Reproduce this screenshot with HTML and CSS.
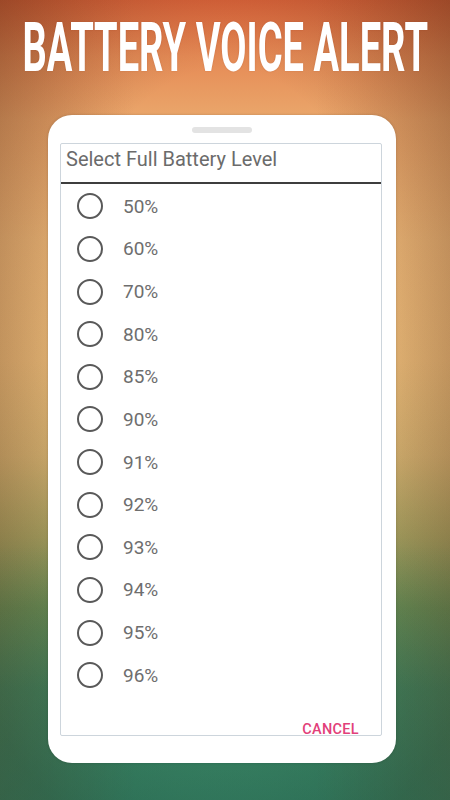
FILE: index.html
```html
<!DOCTYPE html>
<html>
<head>
<meta charset="utf-8">
<link rel="stylesheet" href="styles.css">
</head>
<body>
<div class="screen">
  <h1 class="title"><span class="title-text">BATTERY VOICE ALERT</span></h1>
  <div class="phone">
    <div class="speaker"></div>
    <div class="dialog">
      <div class="dialog-header">Select Full Battery Level</div>
      <ul class="options">
        <li class="option"><span class="radio"></span><span class="label">50%</span></li>
        <li class="option"><span class="radio"></span><span class="label">60%</span></li>
        <li class="option"><span class="radio"></span><span class="label">70%</span></li>
        <li class="option"><span class="radio"></span><span class="label">80%</span></li>
        <li class="option"><span class="radio"></span><span class="label">85%</span></li>
        <li class="option"><span class="radio"></span><span class="label">90%</span></li>
        <li class="option"><span class="radio"></span><span class="label">91%</span></li>
        <li class="option"><span class="radio"></span><span class="label">92%</span></li>
        <li class="option"><span class="radio"></span><span class="label">93%</span></li>
        <li class="option"><span class="radio"></span><span class="label">94%</span></li>
        <li class="option"><span class="radio"></span><span class="label">95%</span></li>
        <li class="option"><span class="radio"></span><span class="label">96%</span></li>
      </ul>
      <div class="dialog-footer"><span class="cancel">CANCEL</span></div>
    </div>
  </div>
</div>
</body>
</html>
```
FILE: styles.css
```css
html, body {
  margin: 0;
  padding: 0;
}
body {
  width: 450px;
  height: 800px;
  overflow: hidden;
  font-family: Roboto, "Liberation Sans", sans-serif;
}
.screen {
  width: 450px;
  height: 800px;
  display: flex;
  flex-direction: column;
  align-items: flex-start;
  overflow: hidden;
  background:
    linear-gradient(180deg, rgba(20,90,55,0) 68%, rgba(20,90,55,0.35) 100%),
    radial-gradient(ellipse 70% 66% at 50% 45%, rgba(0,0,0,0) 55%, rgba(20,30,15,0.30) 100%),
    linear-gradient(90deg, rgba(170,50,20,0.20) 0%, rgba(170,50,20,0) 30%, rgba(170,50,20,0) 70%, rgba(170,50,20,0.20) 100%),
    linear-gradient(180deg,
      #e0643a 0%,
      #e68a55 7%,
      #eaa86c 15%,
      #e8bc7c 30%,
      #e2be7c 45%,
      #cfb876 57%,
      #a4ab68 67%,
      #6a9e62 76%,
      #4a9a74 86%,
      #4a9c84 100%);
}
.title {
  margin: 13px 0 0 0;
  width: 450px;
  height: 69px;
  display: flex;
  justify-content: center;
  font-family: Roboto, "Liberation Sans", sans-serif;
  font-weight: 700;
  font-size: 69px;
  line-height: 69px;
  color: #ffffff;
  white-space: nowrap;
  text-shadow: 0 0 2px rgba(120,40,20,0.25);
}
.title-text {
  flex: none;
  display: block;
  transform: scaleX(0.552);
  transform-origin: 50% 50%;
}
.phone {
  margin: 33px 0 0 48px;
  width: 348px;
  height: 648px;
  box-sizing: border-box;
  background: #ffffff;
  border-radius: 24px;
  box-shadow: 0 0 3px rgba(0,0,0,0.18);
  padding: 12px 14px 0 12px;
  display: flex;
  flex-direction: column;
  align-items: stretch;
}
.speaker {
  align-self: center;
  margin-left: 2px;
  width: 60px;
  height: 6px;
  border-radius: 3px;
  background: #e3e3e3;
}
.dialog {
  margin-top: 10px;
  height: 593px;
  box-sizing: border-box;
  border: 1px solid #cdd5dc;
  border-radius: 2px;
  display: flex;
  flex-direction: column;
}
.dialog-header {
  font-size: 20px;
  line-height: 30px;
  padding: 0 0 8px 5px;
  color: #6b6b6b;
  border-bottom: 2px solid #3d3d3d;
}
.options {
  list-style: none;
  margin: 0;
  padding: 1px 0 0 0;
}
.option {
  height: 42.64px;
  display: flex;
  align-items: center;
  padding-left: 16px;
}
.radio {
  width: 26px;
  height: 26px;
  box-sizing: border-box;
  border: 2.6px solid #595959;
  border-radius: 50%;
  flex: none;
}
.label {
  margin-left: 20px;
  font-size: 19px;
  color: #6e6e6e;
}
.dialog-footer {
  margin-top: auto;
  height: 16px;
  line-height: 22px;
  display: flex;
  justify-content: flex-end;
  padding-right: 22px;
}
.cancel {
  font-size: 14.5px;
  font-weight: 500;
  letter-spacing: 0.3px;
  color: #e2407a;
}
```
